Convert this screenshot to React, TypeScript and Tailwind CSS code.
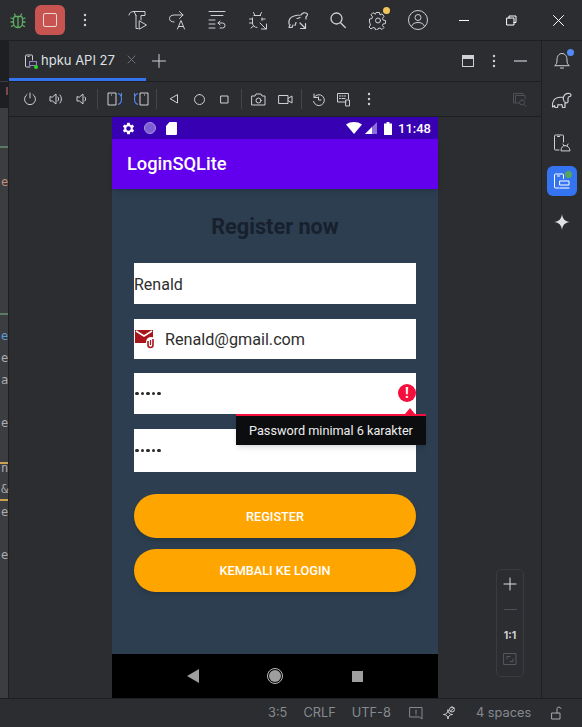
import React from 'react';

const sans = { fontFamily: 'Inter, "Noto Sans", sans-serif' };

type IconProps = { d: string; size?: number; color?: string; width?: number; box?: number; extra?: React.ReactNode };

const Icon: React.FC<IconProps> = ({ d, size = 16, color = '#ced0d6', width = 1, box = 16, extra }) => (
    <svg width={size} height={size} viewBox={`0 0 ${box} ${box}`} fill="none" stroke={color} strokeWidth={width} strokeLinecap="round" strokeLinejoin="round" className="shrink-0">
        <path d={d} />
        {extra}
    </svg>
);

const Dots = ({ color = '#ced0d6' }: { color?: string }) => (
    <svg width="4" height="14" viewBox="0 0 4 14" className="shrink-0" fill={color}>
        <circle cx="2" cy="2" r="1.2" />
        <circle cx="2" cy="7" r="1.2" />
        <circle cx="2" cy="12" r="1.2" />
    </svg>
);

const Divider = () => <div className="w-px h-5 bg-[#43454a] shrink-0" />;

const elephantPath = 'M1.5 17C1 12 3 8.5 7 7.5 9 7 11 7 12.5 7 13.5 4.500 16 3 18.5 3.500 20.5 4 20.500 6.500 18.5 6.500 17.5 6.500 17 8 17 9.500V12C16 13.500 14.500 13 14 12V17.500H11.500L11 14.500C9.500 15 8 15 7 14.500L6.500 17.500H4L3.500 15.500 1.500 17zM12.500 7C12 8.500 12 10 13 11';

const TopBar = () => (
    <div className="h-[41px] shrink-0 flex items-center border-b border-[#1e1f22] bg-[#2b2d30]">
        <div className="w-[35px] flex justify-center">
            <Icon
                size={18}
                box={18}
                color="#5fad65"
                width={1.3}
                d="M6 5.500h6a2 2 0 0 1 1.500 2V12a4.500 4.500 0 0 1-9 0V7.500A2 2 0 0 1 6 5.500zM6.500 5.500 5.500 3M11.500 5.500l1-2.500M4.500 8 2 7M13.500 8 16 7M4.500 11H2M13.500 11H16M4.800 14 2.500 15.500M13.200 14l2.300 1.500M9 6v10"
            />
        </div>
        <div className="w-[30px] h-[30px] rounded-md bg-[#c75450] flex items-center justify-center">
            <div className="w-[14px] h-[14px] rounded-[2px] border-[1.5px] border-[#f0d6d5]" />
        </div>
        <div className="ml-[18px]"><Dots /></div>
        <div className="ml-[41px] flex items-center gap-[20px]">
            <Icon size={20} box={20} d="M1 5C1 3 3 1.500 6 1.500H17V5.500H13V10M8 5.500V18.500H10M6 1.500 8 5.500M11.500 11l7 4-7 4z" />
            <Icon size={20} box={20} d="M6 12C3 12 1.500 10.500 1.500 8.500S3 5 6 5H15M11.500 1.500 15 5 11.500 8.500M9.500 19 13 10.500 16.500 19M10.500 16.500h5" />
            <Icon size={20} box={20} d="M1 1.500H17M3 5.500H15M1 10H7M1 14H7M1 18H7M10 13H14.500a2.500 2.500 0 0 1 0 5H12M12 11 10 13 12 15" />
            <Icon size={20} box={20} d="M6 5.500h6.500M4.500 8v5a4.500 4.500 0 0 0 4.500 4.500M14 8v2.500M7 5.500 5.500 2.500M12 5.500l1.500-3M4.500 9H1.500M4.500 13H1.500M5.500 16 3 18M14 9h3M12 13l6 6M18.500 14v5h-5" />
            <div className="-mx-[1px] flex">
                <Icon size={22} box={22} width={1.2} d="M2 15C1.500 11 3 8 7 7 10 6 12 6 14 6 15 4 18 3 20 4.500 21 5.500 20 7.500 19 7.500V10M3 15.500 2 18.500H5L6 16M9 13.500 8 16.500M13 14l5 5M18.500 14.500V19.500H13.500M10 9.500c1 0 2-.500 3-1" />
            </div>
            <Icon size={20} box={20} width={1.3} d="M8.500 3a5.500 5.500 0 1 1 0 11 5.500 5.500 0 0 1 0-11zM12.800 13l4.500 4.500" />
            <div className="relative">
                <Icon
                    size={20}
                    box={20}
                    d="M8.500 2.500h3l.5 2.500 2-1.200 2 2.500-1.500 2 .5 1.700 2.500.5v3l-2.500.5-.5 1.500 1.500 2-2 2-2-1.500-2 .5-.5 1.500h-2l-.5-2-2-.5-2 1.500-2-2 1.500-2-.5-1.500L1.500 12V9l2.500-.5.500-1.700L3 4.800l2-2.200 2 1.400z"
                    extra={<circle cx="10" cy="10.500" r="2.500" />}
                />
                <div className="absolute -top-[3px] -right-[2px] w-[7px] h-[7px] rounded-full bg-[#f2c55c]" />
            </div>
            <svg width="20" height="20" viewBox="0 0 20 20" fill="none" stroke="#ced0d6" strokeWidth="1" className="shrink-0">
                <circle cx="10" cy="10" r="9.500" />
                <circle cx="10" cy="7.500" r="3" />
                <path d="M3.500 16.500c1-3 3.500-4 6.500-4s5.500 1 6.500 4" />
            </svg>
        </div>
        <div className="ml-[31px] w-[10px] h-px bg-white" />
        <div className="ml-[37px]">
            <Icon size={11} box={11} color="#ffffff" d="M3 3V1h7v6.500H8M1 3h7v7H1z" />
        </div>
        <div className="ml-[36px]">
            <Icon size={11} box={11} color="#ffffff" d="M.5.5l10 10M10.500.5l-10 10" />
        </div>
    </div>
);

const TabBar = () => (
    <div className="h-[41px] shrink-0 flex border-b border-[#1e1f22] bg-[#2b2d30]">
        <div className="relative w-[137px] flex items-center pl-[15px] gap-[3px]">
            <div className="relative">
                <Icon size={14} box={14} d="M6 13H2.500a1 1 0 0 1-1-1V2a1 1 0 0 1 1-1h5a1 1 0 0 1 1 1v4M4 2.500h1" />
                <div className="absolute left-[5px] top-[7px] w-[8px] h-[5px] border border-[#9a7ecc]" />
                <div className="absolute left-[10px] top-[11px] w-[4px] h-[4px] rounded-full bg-[#2bd62b]" />
            </div>
            <span className="text-[13px] text-[#dfe1e5] whitespace-nowrap" style={sans}>hpku API 27</span>
            <span className="absolute left-[118px] top-[14px]">
                <Icon size={9} box={9} color="#6f737a" d="M1 1l7 7M8 1 1 8" />
            </span>
            <div className="absolute left-0 right-0 bottom-0 h-[3px] bg-[#3574f0]" />
        </div>
        <div className="ml-[6px] flex items-center">
            <Icon size={14} box={14} color="#ced0d6" d="M7 .5v13M.5 7h13" />
        </div>
        <div className="ml-auto flex items-center pr-[14px]">
            <svg width="12" height="12" viewBox="0 0 12 12" className="shrink-0">
                <rect x=".5" y=".5" width="11" height="11" fill="none" stroke="#ced0d6" />
                <rect x="1" y="1" width="10" height="3" fill="#ced0d6" />
            </svg>
            <div className="ml-[18px]"><Dots /></div>
            <div className="ml-[18px] w-[13px] h-[2px] bg-[#8a8c91]" />
        </div>
    </div>
);

const DeviceToolbar = () => (
    <div className="h-[35px] shrink-0 flex items-center pl-[14px] pr-[14px] border-b border-[#1e1f22] bg-[#2b2d30]">
        <div className="flex items-center gap-[12px]">
            <Icon size={14} box={14} d="M7 1v5M4 2.500a5.500 5.500 0 1 0 6 0" />
            <Icon size={14} box={14} d="M1 5v4h2.500L7 12V2L3.500 5zM9 5a3 3 0 0 1 0 4M11 3a6 6 0 0 1 0 8" />
            <Icon size={14} box={14} d="M2 5v4h2.500L8 12V2L4.500 5zM10 5a3 3 0 0 1 0 4" />
        </div>
        <div className="ml-[8px]"><Divider /></div>
        <div className="ml-[9px] flex items-center gap-[10px]">
            <svg width="16" height="14" viewBox="0 0 16 14" fill="none" className="shrink-0">
                <path d="M1 1h8v12H1zM4 3h1" stroke="#ced0d6" />
                <path d="M11 1.500c2 .5 3.500 2.500 3.500 5.500s-1.500 5-3.500 5.500M14.500 4V1" stroke="#548af7" strokeWidth="1.100" />
            </svg>
            <svg width="16" height="14" viewBox="0 0 16 14" fill="none" className="shrink-0">
                <path d="M7 1h8v12H7zM11 3h1" stroke="#ced0d6" />
                <path d="M5 1.500C3 2 1.500 4 1.500 7s1.500 5 3.500 5.500M1.500 4V1" stroke="#548af7" strokeWidth="1.100" />
            </svg>
        </div>
        <div className="ml-[7px]"><Divider /></div>
        <div className="ml-[12px] flex items-center gap-[15px]">
            <Icon size={10} box={10} d="M8.500 1v8L1.500 5z" />
            <Icon size={11} box={11} d="M5.500 .5a5 5 0 1 1 0 10 5 5 0 0 1 0-10z" />
            <Icon size={9} box={9} d="M1 1h7v7H1z" />
        </div>
        <div className="ml-[12px]"><Divider /></div>
        <div className="ml-[9px] flex items-center gap-[12px]">
            <Icon size={15} box={15} d="M1 4h3l1-2h5l1 2h3v9H1z" extra={<circle cx="7.500" cy="8.500" r="2.500" />} />
            <Icon size={15} box={15} d="M1 3.500h9v8H1zM10 6.500l4-2.500v7l-4-2.500" />
        </div>
        <div className="ml-[8px]"><Divider /></div>
        <div className="ml-[9px] flex items-center gap-[10px]">
            <Icon size={15} box={15} d="M3 2v3.500h3.500M3 5.500a5.500 5.500 0 1 1-.5 4M7.500 5v3h2.500" />
            <Icon size={15} box={15} d="M10 10H1.500V1.500h11V7M3.500 4h1M6 4h1M8.500 4h1M3.500 6.500h1M6 6.500h3M10 8h3.500v6H10z" />
        </div>
        <div className="ml-[16px]"><Dots /></div>
        <div className="ml-auto opacity-50">
            <Icon size={15} box={15} color="#6f737a" d="M3 11H1.500V1.500H11V3M3.500 3.500H13V7M3.500 3.500V11H7M10 8a2.500 2.500 0 1 1 0 5 2.500 2.500 0 0 1 0-5zM12 12.500l2 2" />
        </div>
    </div>
);

const PhoneStatusBar = () => (
    <div className="h-[22px] shrink-0 bg-[#3700b3] flex items-center pl-[10px] pr-[7px]">
        <svg width="13" height="13" viewBox="3 2 20 20" fill="#fff" className="shrink-0">
            <path d="M19.400 13a7.500 7.500 0 0 0 0-2l2.100-1.600-2-3.500-2.500 1a7.500 7.500 0 0 0-1.700-1L15 3.200h-4l-.4 2.700a7.500 7.500 0 0 0-1.700 1l-2.500-1-2 3.500L6.500 11a7.500 7.500 0 0 0 0 2l-2.100 1.600 2 3.500 2.500-1a7.500 7.500 0 0 0 1.700 1l.4 2.700h4l.4-2.700a7.500 7.500 0 0 0 1.700-1l2.500 1 2-3.500zM13 15.500a3.500 3.500 0 1 1 0-7 3.500 3.500 0 0 1 0 7z" />
        </svg>
        <div className="ml-[9px] w-[12px] h-[12px] rounded-full bg-[#7d5fd3] border border-[#a893e2]" />
        <svg width="11" height="13" viewBox="0 0 11 13" fill="#fff" className="ml-[10px] shrink-0">
            <path d="M3.500 0H10a1 1 0 0 1 1 1v11a1 1 0 0 1-1 1H1a1 1 0 0 1-1-1V4z" />
        </svg>
        <svg width="16" height="12" viewBox="0 0 16 12" fill="#fff" className="ml-auto shrink-0">
            <path d="M0 2.500C4.500-.8 11.500-.8 16 2.500L8 12z" />
        </svg>
        <svg width="12" height="12" viewBox="0 0 12 12" className="ml-[3px] shrink-0">
            <path d="M12 0v12H0z" fill="#8a6fd8" />
            <path d="M7 5v7H0z" fill="#fff" />
        </svg>
        <svg width="8" height="13" viewBox="0 0 8 13" fill="#fff" className="ml-[7px] shrink-0">
            <path d="M2.500 0h3v1.500H8V13H0V1.500h2.500z" />
        </svg>
        <span className="ml-[6px] text-[13px] font-medium text-white leading-none" style={{ fontFamily: 'Roboto, sans-serif' }}>11:48</span>
    </div>
);

const Field = ({ className, children }: { className: string; children: React.ReactNode }) => (
    <div className={`bg-white flex items-center ${className}`}>{children}</div>
);

const PasswordDots = () => (
    <div className="flex gap-[2px] pl-px">
        {[0, 1, 2, 3, 4].map(i => (
            <span key={i} className="w-[3.500px] h-[3.500px] rounded-full bg-[#2a2a2a]" />
        ))}
    </div>
);

const Phone = () => (
    <div className="relative w-[326px] flex flex-col" style={{ fontFamily: 'Roboto, sans-serif' }}>
        <PhoneStatusBar />
        <div className="h-[50px] shrink-0 bg-[#6200ee] flex items-center pl-[15px] shadow-md z-10">
            <span className="text-[18.300px] font-medium text-white">LoginSQLite</span>
        </div>
        <div className="flex-1 bg-[#2c3e50] px-[22px] flex flex-col">
            <h1 className="mt-[23px] h-[30px] text-[21.700px] leading-[30px] font-bold text-[#17202c] text-center">Register now</h1>
            <Field className="mt-[21px] h-[41px]">
                <span className="pt-[2px] text-[16px] text-[#2e2e2e]">Renald</span>
            </Field>
            <Field className="mt-[15px] h-[40px]">
                <svg width="21" height="20" viewBox="0 0 21 20" className="ml-px shrink-0">
                    <rect x="0" y="1" width="18" height="13" fill="#a8161c" />
                    <path d="M1 2l8 5 8-5" fill="none" stroke="#fff" strokeWidth="1.500" />
                    <rect x="11" y="8" width="10" height="12" rx="5" fill="#fff" />
                    <path d="M13 12v4a2.500 2.500 0 0 0 5 0v-6" fill="none" stroke="#a8161c" strokeWidth="1.600" />
                    <path d="M15.500 11v5" stroke="#a8161c" strokeWidth="1.200" />
                </svg>
                <span className="ml-[9px] pt-[2px] text-[16.200px] text-[#2e2e2e]">Renald@gmail.com</span>
            </Field>
            <Field className="mt-[14px] h-[41px] relative">
                <PasswordDots />
                <div className="absolute right-0 top-[11px] w-[18px] h-[18px] rounded-full bg-[#f50f3c] flex items-center justify-center">
                    <span className="text-[14px] font-bold text-white leading-none">!</span>
                </div>
            </Field>
            <Field className="mt-[15px] h-[43px]">
                <PasswordDots />
            </Field>
            <button className="mt-[22px] h-[44px] pt-[2px] rounded-[22px] bg-[#ffa500] text-white text-[12.700px] font-medium shadow-md">REGISTER</button>
            <button className="mt-[11px] h-[43px] rounded-[22px] bg-[#ffa500] text-white text-[12.700px] font-medium shadow-md">KEMBALI KE LOGIN</button>
        </div>
        <div className="h-[44px] shrink-0 bg-black flex items-center">
            <svg width="12" height="14" viewBox="0 0 12 14" fill="#9e9e9e" className="ml-[75px] shrink-0">
                <path d="M12 0v14L0 7z" />
            </svg>
            <div className="ml-[68px] w-[16px] h-[16px] rounded-full border border-[#bdbdbd] flex items-center justify-center">
                <div className="w-[12px] h-[12px] rounded-full bg-[#9e9e9e]" />
            </div>
            <div className="ml-[69px] w-[11px] h-[11px] bg-[#9e9e9e]" />
        </div>
        <div className="absolute left-[124px] top-[297px] w-[190px] h-[31px] bg-[#0c0d0f] border-t-2 border-[#f50f3c] flex items-center pl-[13px] shadow-md z-20">
            <span className="text-[12.700px] text-[#eeeeee] whitespace-nowrap">Password minimal 6 karakter</span>
            <div className="absolute right-[11px] -top-[8px] w-0 h-0 border-x-[5px] border-x-transparent border-b-[6px] border-b-[#f50f3c]" />
        </div>
    </div>
);

const ZoomControls = () => (
    <div className="absolute left-[496px] top-[569px] w-[28px] h-[108px] rounded-[5px] border border-[#393b40] flex flex-col items-center pt-[7px]">
        <Icon size={14} box={14} color="#dfe1e5" d="M7 1v12M1 7h12" />
        <div className="mt-[18px] w-[13px] h-px bg-[#4e5157]" />
        <span className="mt-[21px] text-[10.500px] font-bold text-[#ced0d6] leading-none" style={sans}>1:1</span>
        <div className="mt-[10px]">
            <Icon size={14} box={14} color="#55585e" d="M1 1.500h12v11H1zM4 7V4.500h3M10 7v2.500H7" />
        </div>
    </div>
);

const LeftEdge = () => {
    // scraps of the editor that peek out behind the panel
    const marks: { top: number; text?: string; color?: string; line?: string }[] = [
        { top: 146, line: '#5d7a69' },
        { top: 176, text: 'e', color: '#c08d76' },
        { top: 313, line: '#5d7a69' },
        { top: 330, text: 'e', color: '#5c9bd6' },
        { top: 352, text: 'e', color: '#a9abb0' },
        { top: 374, text: 'a', color: '#a9abb0' },
        { top: 417, text: 'e', color: '#a9abb0' },
        { top: 462, line: '#c9a24f' },
        { top: 462, text: 'n', color: '#a9abb0' },
        { top: 483, text: '&', color: '#a9abb0' },
        { top: 499, line: '#c9a24f' },
        { top: 506, text: 'e', color: '#a9abb0' },
        { top: 549, text: 'e', color: '#a9abb0' },
    ];
    return (
        <>
            {marks.map(m =>
                m.line ? (
                    <div key={`l${m.top}`} className="absolute left-0 w-[8px] h-[2px]" style={{ top: m.top, backgroundColor: m.line }} />
                ) : (
                    <span key={m.top} className="absolute left-px text-[12px] leading-none" style={{ top: m.top, color: m.color, fontFamily: '"DejaVu Sans Mono", monospace' }}>{m.text}</span>
                )
            )}
        </>
    );
};

const RightRail = () => (
    <div className="w-[41px] shrink-0 border-l border-[#1e1f22] bg-[#2b2d30] flex flex-col items-center pt-[9px]">
        <div className="relative">
            <Icon size={20} box={20} d="M3 15.500c1.500-1 2-2.500 2-5.500 0-4 2-6.500 5-6.500s5 2.500 5 6.500c0 3 .5 4.500 2 5.500zM8.500 18h3" />
            <div className="absolute -top-[1px] -right-[2px] w-[7px] h-[7px] rounded-full bg-[#548af7]" />
        </div>
        <div className="mt-[20px]">
            <Icon size={22} box={22} width={1.2} d={elephantPath} />
        </div>
        <div className="mt-[21px]">
            <Icon size={20} box={20} d="M7 17H3.500a1 1 0 0 1-1-1V3a1 1 0 0 1 1-1h7a1 1 0 0 1 1 1v6M5.500 3.500h2M9 17.500c0-3 2-5 4-5s5 2 5 5zM11 11l1 2M16 11l-1 2" />
        </div>
        <div className="relative mt-[13px] w-[30px] h-[30px] rounded-md bg-[#3574f0] flex items-center justify-center">
            <Icon size={18} box={18} color="#ffffff" d="M6 16H2.500a1 1 0 0 1-1-1V3a1 1 0 0 1 1-1h7a1 1 0 0 1 1 1v3.500M4.500 4h2M7 9h9v4H7zM7 16h9" />
            <div className="absolute top-[5px] right-[5px] w-[7px] h-[7px] rounded-full bg-[#57a65c]" />
        </div>
        <svg width="16" height="16" viewBox="0 0 16 16" fill="#dfe1e5" className="mt-[18px] shrink-0">
            <path d="M8 0c.5 5 3 7.500 8 8-5 .5-7.500 3-8 8-.5-5-3-7.500-8-8 5-.5 7.500-3 8-8z" />
        </svg>
    </div>
);

const StatusBar = () => (
    <div className="h-[29px] shrink-0 bg-[#2b2d30] border-t border-[#1e1f22] flex items-center pl-[268px] text-[12.800px] text-[#868a91] whitespace-nowrap" style={sans}>
        <span>3:5</span>
        <span className="ml-[16px]">CRLF</span>
        <span className="ml-[16px]">UTF-8</span>
        <span className="ml-[18px]">
            <Icon size={14} box={14} color="#868a91" d="M1 1.500h12V13l-2.500-2H1zM7 4v3.500M7 9v.2" />
        </span>
        <span className="ml-[19px]">
            <Icon size={15} box={15} color="#ced0d6" d="M6 4c.3 3 1.500 4.300 4.500 4.500-3 .3-4.200 1.500-4.500 4.500-.3-3-1.500-4.200-4.500-4.500C4.500 8.300 5.700 7 6 4zM10 1a2.500 2.500 0 1 1 0 5 2.500 2.500 0 0 1 0-5zM8.500 5 12 2" />
        </span>
        <span className="ml-[19px]">4 spaces</span>
        <span className="ml-[20px]">
            <Icon size={14} box={14} color="#a9abb0" d="M1 7h8v6H1zM6 7V4a2 2 0 0 1 4-1.500" />
        </span>
    </div>
);

const App: React.FC = () => (
    <div className="relative w-[582px] h-[727px] overflow-hidden flex flex-col bg-[#2b2d30]" style={sans}>
        <TopBar />
        <div className="flex-1 min-h-0 flex">
            <div className="w-[8px] shrink-0 flex flex-col">
                <div className="h-[67px] bg-[#1e1f22] flex flex-col">
                    <div className="mt-[40px] h-px bg-[#393b40]" />
                    <div className="mt-[5px] ml-[6px] w-[2px] h-[8px] bg-[#7a4a4a]" />
                </div>
                <div className="flex-1 bg-[#3c3d40]" />
            </div>
            <div className="w-px bg-[#1e1f22] shrink-0" />
            <div className="flex-1 min-w-0 flex flex-col">
                <TabBar />
                <DeviceToolbar />
                <div className="flex-1 min-h-0 flex pl-[103px] bg-[#2b2d30]">
                    <Phone />
                </div>
            </div>
            <RightRail />
        </div>
        <StatusBar />
        <LeftEdge />
        <ZoomControls />
    </div>
);

export default App;
